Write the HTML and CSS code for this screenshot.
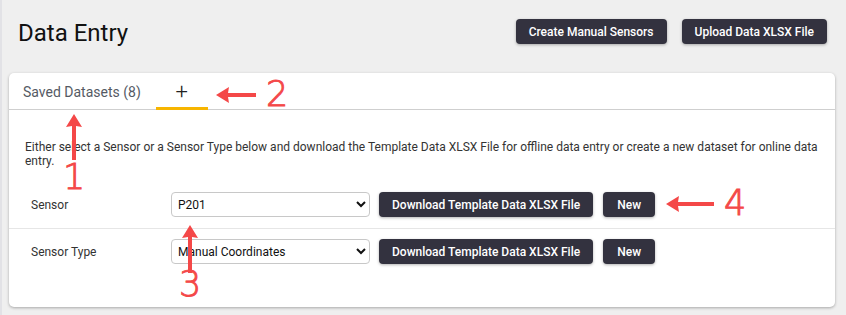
FILE: index.html
```html
<!DOCTYPE html>
<html>
<head>
<meta charset="utf-8">
<link rel="stylesheet" href="styles.css">
</head>
<body>
<div class="page">
  <header class="header">
    <h1 class="title">Data Entry</h1>
    <div class="actions">
      <button class="btn">Create Manual Sensors</button>
      <button class="btn">Upload Data XLSX File</button>
    </div>
  </header>
  <section class="card">
    <nav class="tabs">
      <div class="tab">Saved Datasets (8)</div>
      <div class="tab tab-active">+</div>
    </nav>
    <div class="body">
      <p class="intro">Either select a Sensor or a Sensor Type below and download the Template Data XLSX File for offline data entry or create a new dataset for online data entry.</p>
      <div class="row">
        <label class="label">Sensor</label>
        <select class="select"><option>P201</option></select>
        <button class="btn btn-row">Download Template Data XLSX File</button>
        <button class="btn btn-row btn-new">New</button>
      </div>
      <div class="row row-last">
        <label class="label">Sensor Type</label>
        <select class="select"><option>Manual Coordinates</option></select>
        <button class="btn btn-row">Download Template Data XLSX File</button>
        <button class="btn btn-row btn-new">New</button>
      </div>
    </div>
  </section>

  <div class="anno anno-up anno-1">
    <svg width="20" height="46" viewBox="0 0 20 46"><path d="M10 0 L18 13 L12 12 L12 46 L8 46 L8 12 L2 13 Z" fill="#f44848"/></svg>
    <span class="num">1</span>
  </div>
  <div class="anno anno-left anno-2">
    <svg width="40" height="16" viewBox="0 0 40 16"><path d="M0 8 L13 0 L12 6 L40 6 L40 10 L12 10 L13 16 Z" fill="#f44848"/></svg>
    <span class="num">2</span>
  </div>
  <div class="anno anno-up anno-3">
    <svg width="20" height="48" viewBox="0 0 20 48"><path d="M10 0 L18 13 L12 12 L12 48 L8 48 L8 12 L2 13 Z" fill="#f44848"/></svg>
    <span class="num">3</span>
  </div>
  <div class="anno anno-left anno-4">
    <svg width="48" height="16" viewBox="0 0 48 16"><path d="M0 8 L13 0 L12 6 L48 6 L48 10 L12 10 L13 16 Z" fill="#f44848"/></svg>
    <span class="num">4</span>
  </div>
</div>
</body>
</html>
```

FILE: styles.css
```css
* { box-sizing: border-box; }
html, body { margin: 0; padding: 0; }
body {
  background: #efefef;
  font-family: Roboto, "Liberation Sans", sans-serif;
  width: 846px;
  height: 315px;
  overflow: hidden;
}
.page {
  position: relative;
  height: 315px;
  width: 846px;
  border-left: 2px solid #e2e2e6;
  padding: 0 11px 0 7px;
}
.header {
  display: flex;
  align-items: flex-start;
  justify-content: space-between;
  padding: 19px 8px 0 9px;
  height: 73px;
}
.title {
  margin: 0;
  font-size: 24px;
  font-weight: 400;
  color: #111;
  line-height: 28px;
}
.actions { display: flex; gap: 15px; }
.btn {
  font-family: Roboto, "Liberation Sans", sans-serif;
  font-weight: 500;
  font-size: 12px;
  color: #fff;
  background: #33323f;
  border: none;
  border-radius: 4px;
  height: 25px;
  padding: 0 13px;
  box-shadow: 0 1px 3px rgba(0,0,0,0.3);
  cursor: pointer;
}
.card {
  background: #fff;
  border-radius: 5px;
  box-shadow: 0 1px 3px rgba(0,0,0,0.3);
  height: 234px;
  width: 826px;
}
.tabs {
  display: flex;
  height: 37px;
  border-bottom: 1px solid #cfcfcf;
}
.tab {
  display: flex;
  align-items: center;
  padding: 0 14px;
  font-size: 14px;
  color: #555a64;
  height: 37px;
}
.tab-active {
  margin-left: 1px;
  width: 52px;
  justify-content: center;
  font-size: 22px;
  font-weight: 300;
  color: #222;
  border-bottom: 3px solid #f7b500;
  padding-top: 2px;
}
.intro {
  margin: 0;
  padding: 30px 16px 0 16px;
  font-size: 12px;
  line-height: 14px;
  color: #333;
}
.row {
  display: flex;
  align-items: center;
  padding: 10px 0 11px 22px;
  border-bottom: 1px solid #e6e6e6;
}
.row:first-of-type { margin-top: 14px; }
.row-last { border-bottom: none; }
.label {
  width: 140px;
  font-size: 12px;
  color: #333;
}
.select {
  width: 199px;
  height: 25px;
  border: 1px solid #c8c8c8;
  border-radius: 4px;
  background: #fff;
  font-family: Roboto, "Liberation Sans", sans-serif;
  font-size: 12px;
  color: #111;
  padding: 0 2px;
  margin-right: 9px;
}
.btn-row { margin-right: 10px; }
.btn-new { width: 52px; padding: 0; }
.anno {
  position: absolute;
  color: #f44848;
  font-family: "DejaVu Sans", sans-serif;
  font-weight: 200;
  -webkit-text-stroke: 0.9px #f44848;
  font-size: 35px;
  line-height: 1;
  display: flex;
}
.anno svg { display: block; }
.anno-up { flex-direction: column; align-items: center; }
.anno-left { flex-direction: row; align-items: center; gap: 10px; }
.anno-1 { left: 61px; top: 114px; }
.anno-2 { left: 214px; top: 77px; }
.anno-3 { left: 177px; top: 225px; }
.anno-3 .num { margin-top: -6px; }
.anno-4 { left: 664px; top: 186px; }
```
